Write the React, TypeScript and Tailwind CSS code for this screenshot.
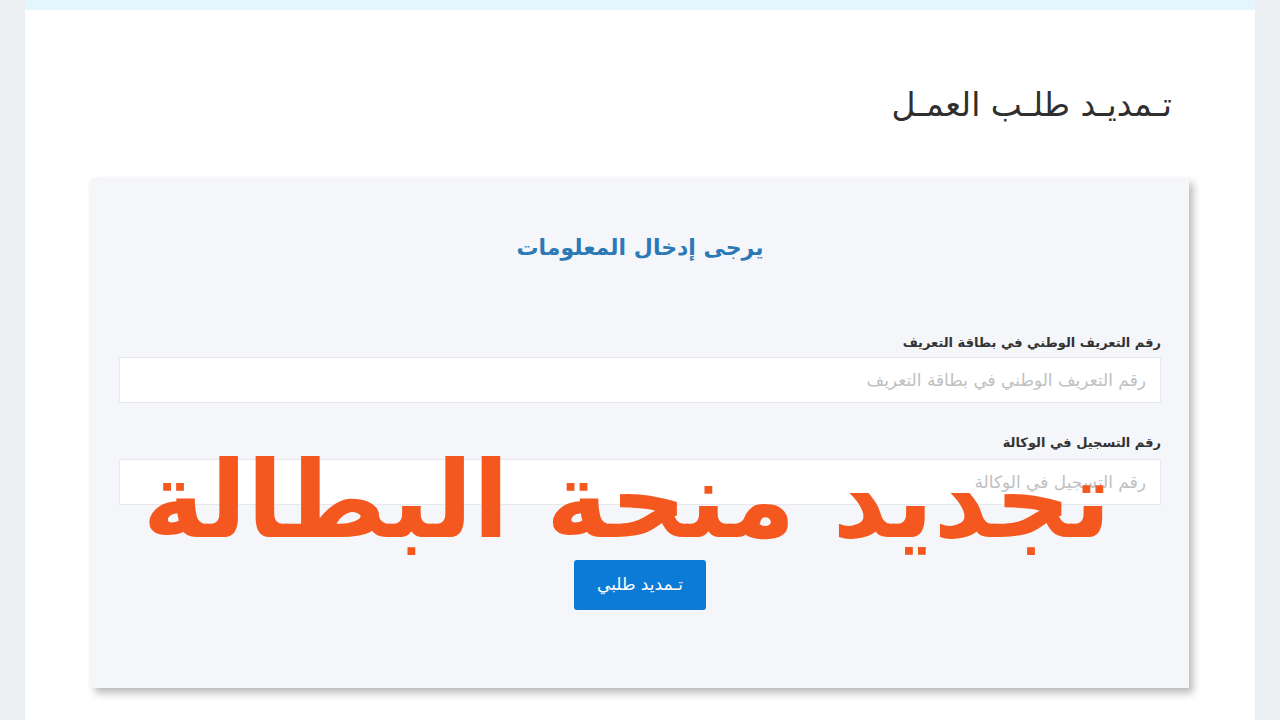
export default function App() {
  return (
    <div
      dir="rtl"
      className="min-h-screen bg-[#eceff1] px-[25px] text-[#333]"
      style={{ fontFamily: '"DejaVu Sans", "Noto Sans", sans-serif' }}
    >
      <div className="min-h-[720px] bg-white">
        <div className="h-[10px] bg-[#e3f5fd]" />

        <h1 className="pt-[70px] pr-[83px] text-[33px] leading-[50px] font-normal text-[#2f2f2f]">
          تـمديـد طلـب العمـل
        </h1>

        <div className="relative mx-[66px] mt-[48px] bg-[#f5f6fa] px-[28px] pt-[55px] pb-[78px] shadow-[4px_5px_8px_rgba(0,0,0,0.28)]">
          <h2 className="text-center text-[22px] leading-[30px] font-bold text-[#2b79b6]">
            يرجى إدخال المعلومات
          </h2>

          <div className="mt-[70px]">
            <label className="block text-[13px] leading-[20px] font-bold text-[#333]">
              رقم التعريف الوطني في بطاقة التعريف
            </label>
            <input
              placeholder="رقم التعريف الوطني في بطاقة التعريف"
              className="mt-[4px] h-[46px] w-full border border-[#e6e8ec] bg-white px-[14px] text-[17px] placeholder:text-[#c0c0c0] outline-none"
            />
          </div>

          <div className="mt-[30px]">
            <label className="block text-[13px] leading-[20px] font-bold text-[#333]">
              رقم التسجيل في الوكالة
            </label>
            <input
              placeholder="رقم التسجيل في الوكالة"
              className="mt-[6px] h-[46px] w-full border border-[#e6e8ec] bg-white px-[14px] text-[17px] placeholder:text-[#c0c0c0] outline-none"
            />
          </div>

          <div className="mt-[55px] flex justify-center">
            <button className="h-[50px] w-[132px] rounded-[3px] bg-[#0b7bd6] text-[17px] text-white">
              تـمديد طلبي
            </button>
          </div>

          {/* overlay caption on top of the form */}
          <div className="pointer-events-none absolute right-[78px] top-[263px] whitespace-nowrap text-[106px] leading-[120px] font-bold text-[#f4581e]">
            تجديد منحة البطالة
          </div>
        </div>
      </div>
    </div>
  );
}
